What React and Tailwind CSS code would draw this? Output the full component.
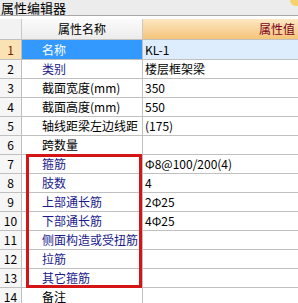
const rows = [
  { n: 1, name: "名称", value: "KL-1", blue: true },
  { n: 2, name: "类别", value: "楼层框架梁", blue: true },
  { n: 3, name: "截面宽度(mm)", value: "350" },
  { n: 4, name: "截面高度(mm)", value: "550" },
  { n: 5, name: "轴线距梁左边线距", value: "(175)" },
  { n: 6, name: "跨数量", value: "" },
  { n: 7, name: "箍筋", value: "Φ8@100/200(4)", blue: true },
  { n: 8, name: "肢数", value: "4", blue: true },
  { n: 9, name: "上部通长筋", value: "2Φ25", blue: true },
  { n: 10, name: "下部通长筋", value: "4Φ25", blue: true },
  { n: 11, name: "侧面构造或受扭筋", value: "", blue: true },
  { n: 12, name: "拉筋", value: "", blue: true },
  { n: 13, name: "其它箍筋", value: "", blue: true },
  { n: 14, name: "备注", value: "" },
];

export default function App() {
  return (
    <div
      className="relative w-[298px] h-[303px] overflow-hidden bg-white text-[12px] text-black"
      style={{ fontFamily: '"Noto Sans CJK SC", "Liberation Sans", sans-serif' }}
    >
      {/* title bar */}
      <div className="h-[16px] bg-[#ececec] border-b border-[#a8a8a8] text-[13px] leading-[16px] pl-px whitespace-nowrap">
        属性编辑器
      </div>
      <div className="absolute -top-[6px] -right-[4px] w-[12px] h-[12px] rounded-full bg-[#f3d36b]" />
      <div className="h-[3px]" />

      {/* header */}
      <div className="flex h-[21px] border-b border-[#c0c0c0]">
        <div className="w-[22px] shrink-0 bg-[#f2f2f2] border-r border-[#c8c8c8]" />
        <div className="w-[121px] shrink-0 bg-gradient-to-b from-[#fbfbfb] to-[#ececec] border-r border-[#c8c8c8] flex items-center justify-center leading-none">
          属性名称
        </div>
        <div className="flex-1 bg-gradient-to-b from-[#fde7c2] to-[#f4c479] flex items-center justify-end pr-[3px] text-[#7a0020] leading-none">
          属性值
        </div>
      </div>

      {/* rows */}
      {rows.map((r) => {
        const sel = r.n === 1;
        return (
          <div
            key={r.n}
            className={`flex border-b border-[#c0c0c0] ${sel ? "h-[20px]" : "h-[19px]"}`}
          >
            <div
              className={`w-[22px] shrink-0 border-r border-[#c0c0c0] flex items-center justify-center leading-none ${
                sel ? "bg-[#fbe2b4] text-[#7a2000]" : "bg-[#f6f6f6]"
              }`}
            >
              {r.n}
            </div>
            <div
              className={`w-[121px] shrink-0 border-r border-[#c0c0c0] flex items-center pl-[20px] leading-none whitespace-nowrap overflow-hidden ${
                sel ? "bg-[#3399ff] text-white" : r.blue ? "text-[#1a1a8c]" : "text-black"
              }`}
            >
              {r.name}
            </div>
            <div
              className={`flex-1 flex items-center pl-[2px] leading-none whitespace-nowrap ${
                sel ? "bg-[#deedfd]" : ""
              }`}
            >
              {r.value}
            </div>
          </div>
        );
      })}

      {/* red highlight box */}
      <div className="absolute left-[26px] top-[154px] w-[116px] h-[134px] border-[3px] border-[#d41515]" />
    </div>
  );
}
